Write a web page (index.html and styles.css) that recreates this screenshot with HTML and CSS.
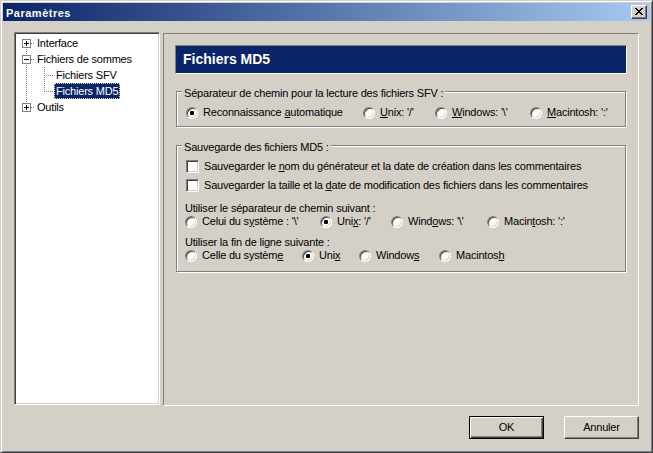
FILE: index.html
```html
<!DOCTYPE html>
<html lang="fr">
<head>
<meta charset="utf-8">
<title>Paramètres</title>
<link rel="stylesheet" href="styles.css">
</head>
<body>
<div class="window">
  <div class="titlebar">
    <span class="title">Paramètres</span>
    <span class="close">
      <svg width="8" height="7" viewBox="0 0 8 7" shape-rendering="crispEdges">
        <g fill="#000">
          <rect x="0" y="0" width="2" height="1"/><rect x="6" y="0" width="2" height="1"/>
          <rect x="1" y="1" width="2" height="1"/><rect x="5" y="1" width="2" height="1"/>
          <rect x="2" y="2" width="4" height="1"/>
          <rect x="3" y="3" width="2" height="1"/>
          <rect x="2" y="4" width="4" height="1"/>
          <rect x="1" y="5" width="2" height="1"/><rect x="5" y="5" width="2" height="1"/>
          <rect x="0" y="6" width="2" height="1"/><rect x="6" y="6" width="2" height="1"/>
        </g>
      </svg>
    </span>
  </div>
  <div class="client">
    <div class="main">
      <div class="tree">
        <div class="trow">
          <svg class="gut" width="19" height="16" viewBox="0 0 19 16" shape-rendering="crispEdges">
            <g stroke="#808080" stroke-dasharray="1 1"><line x1="15" y1="8.5" x2="19" y2="8.5"/><line x1="10.5" y1="14" x2="10.5" y2="16"/></g>
            <rect x="6.5" y="4.5" width="8" height="8" fill="#fff" stroke="#808080"/>
            <g stroke="#000"><line x1="8" y1="8.5" x2="13" y2="8.5"/><line x1="10.5" y1="6" x2="10.5" y2="11"/></g>
          </svg>
          <span class="lbl">Interface</span>
        </div>
        <div class="trow">
          <svg class="gut" width="19" height="16" viewBox="0 0 19 16" shape-rendering="crispEdges">
            <g stroke="#808080" stroke-dasharray="1 1"><line x1="15" y1="8.5" x2="19" y2="8.5"/><line x1="10.5" y1="0" x2="10.5" y2="4"/><line x1="10.5" y1="14" x2="10.5" y2="16"/></g>
            <rect x="6.5" y="4.5" width="8" height="8" fill="#fff" stroke="#808080"/>
            <g stroke="#000"><line x1="8" y1="8.5" x2="13" y2="8.5"/></g>
          </svg>
          <span class="lbl">Fichiers de sommes</span>
        </div>
        <div class="trow">
          <svg class="gut" width="38" height="16" viewBox="0 0 38 16" shape-rendering="crispEdges">
            <g stroke="#808080" stroke-dasharray="1 1"><line x1="10.5" y1="0" x2="10.5" y2="16"/><line x1="28.5" y1="0" x2="28.5" y2="16"/><line x1="30" y1="8.5" x2="38" y2="8.5"/></g>
          </svg>
          <span class="lbl">Fichiers SFV</span>
        </div>
        <div class="trow">
          <svg class="gut" width="38" height="16" viewBox="0 0 38 16" shape-rendering="crispEdges">
            <g stroke="#808080" stroke-dasharray="1 1"><line x1="10.5" y1="0" x2="10.5" y2="16"/><line x1="28.5" y1="0" x2="28.5" y2="9"/><line x1="30" y1="8.5" x2="38" y2="8.5"/></g>
          </svg>
          <span class="lbl sel">Fichiers MD5</span>
        </div>
        <div class="trow">
          <svg class="gut" width="19" height="16" viewBox="0 0 19 16" shape-rendering="crispEdges">
            <g stroke="#808080" stroke-dasharray="1 1"><line x1="15" y1="8.5" x2="19" y2="8.5"/><line x1="10.5" y1="0" x2="10.5" y2="4"/></g>
            <rect x="6.5" y="4.5" width="8" height="8" fill="#fff" stroke="#808080"/>
            <g stroke="#000"><line x1="8" y1="8.5" x2="13" y2="8.5"/><line x1="10.5" y1="6" x2="10.5" y2="11"/></g>
          </svg>
          <span class="lbl">Outils</span>
        </div>
      </div>

      <div class="panel">
        <div class="header">Fichiers MD5</div>

        <div class="group g1">
          <span class="legend">Séparateur de chemin pour la lecture des fichiers SFV :</span>
          <div class="opts opts1">
            <div class="opt"><span class="radio on"></span><span>Reconnaissance <u>a</u>utomatique</span></div>
            <div class="opt"><span class="radio"></span><span><u>U</u>nix: '/'</span></div>
            <div class="opt"><span class="radio"></span><span><u>W</u>indows: '\'</span></div>
            <div class="opt"><span class="radio"></span><span><u>M</u>acintosh: ':'</span></div>
          </div>
        </div>

        <div class="group g2">
          <span class="legend">Sauvegarde des fichiers MD5 :</span>
          <div class="crow"><span class="check"></span><span>Sauvegarder le <u>n</u>om du générateur et la date de création dans les commentaires</span></div>
          <div class="crow second"><span class="check"></span><span>Sauvegarder la taille et la <u>d</u>ate de modification des fichiers dans les commentaires</span></div>
          <div class="sub">Utiliser le séparateur de chemin suivant :</div>
          <div class="opts opts3">
            <div class="opt"><span class="radio"></span><span>Celui du s<u>y</u>stème : '\'</span></div>
            <div class="opt"><span class="radio on"></span><span>Uni<u>x</u>: '/'</span></div>
            <div class="opt"><span class="radio"></span><span>Wind<u>o</u>ws: '\'</span></div>
            <div class="opt"><span class="radio"></span><span>Macin<u>t</u>osh: ':'</span></div>
          </div>
          <div class="sub sub2">Utiliser la fin de ligne suivante :</div>
          <div class="opts opts4">
            <div class="opt"><span class="radio"></span><span>Celle du systèm<u>e</u></span></div>
            <div class="opt"><span class="radio on"></span><span>Uni<u>x</u></span></div>
            <div class="opt"><span class="radio"></span><span>Window<u>s</u></span></div>
            <div class="opt"><span class="radio"></span><span>Macintos<u>h</u></span></div>
          </div>
        </div>
      </div>
    </div>

    <div class="buttons">
      <div class="btn default">OK</div>
      <div class="btn">Annuler</div>
    </div>
  </div>
</div>
</body>
</html>
```
FILE: styles.css
```css
html, body {
  margin: 0;
  background: #d4d0c8;
}
body {
  font-family: "Liberation Sans", Arial, sans-serif;
  font-size: 11px;
  color: #000;
  letter-spacing: -0.2px;
}
.window {
  width: 653px;
  height: 453px;
  box-sizing: border-box;
  border: 1px solid;
  border-color: #d4d0c8 #404040 #404040 #d4d0c8;
  box-shadow: inset 1px 1px #fff, inset -1px -1px #808080;
  padding: 2px;
  display: flex;
  flex-direction: column;
  background: #d4d0c8;
}
.titlebar {
  flex: none;
  height: 18px;
  margin-bottom: 1px;
  display: flex;
  align-items: flex-start;
  justify-content: space-between;
  background: linear-gradient(to right, #0a246a, #a6caf0);
  color: #fff;
}
.title {
  font-weight: bold;
  line-height: 18px;
  padding: 1px 0 0 3px;
  letter-spacing: 0.5px;
}
.close {
  width: 16px;
  height: 14px;
  margin: 2px 3px 0 0;
  box-sizing: border-box;
  border: 1px solid;
  border-color: #fff #404040 #404040 #fff;
  box-shadow: inset -1px -1px #808080;
  background: #d4d0c8;
  display: flex;
  align-items: center;
  justify-content: center;
  padding: 0 1px 1px 0;
}
.close svg { display: block; }

.client {
  flex: 1;
  display: flex;
  flex-direction: column;
  padding: 10px 11px 11px;
}
.main {
  display: flex;
  gap: 3px;
  align-items: flex-start;
}
.tree {
  width: 146px;
  height: 373px;
  box-sizing: border-box;
  background: #fff;
  border: 1px solid;
  border-color: #808080 #fff #fff #808080;
  box-shadow: inset 1px 1px #404040, inset -1px -1px #d4d0c8;
  padding: 2px 0 0 1px;
}
.trow {
  display: flex;
  height: 16px;
  align-items: flex-start;
}
.gut { display: block; flex: none; }
.lbl {
  line-height: 16px;
  height: 16px;
  padding: 0 2px;
  white-space: nowrap;
  box-sizing: border-box;
}
.lbl.sel {
  background: #0a246a;
  color: #fff;
  outline: 1px dotted #e8e0a0;
  outline-offset: -1px;
}

.panel {
  width: 476px;
  height: 373px;
  margin-top: 1px;
  box-sizing: border-box;
  border: 1px solid;
  border-color: #808080 #fff #fff #808080;
  padding: 11px 11px 0;
}
.header {
  height: 29px;
  box-sizing: border-box;
  background: #0a246a;
  border: 1px solid;
  border-color: #808080 #fff #fff #808080;
  color: #fff;
  font-weight: bold;
  font-size: 14px;
  line-height: 27px;
  padding-left: 7px;
  letter-spacing: 0;
}
.group {
  position: relative;
  width: 450px;
  margin-left: 1px;
  box-sizing: border-box;
  border: 1px solid #808080;
  box-shadow: inset 1px 1px #fff, 1px 1px #fff;
}
.g1 {
  margin-top: 17px;
  padding: 14px 0 7px 9px;
}
.g2 {
  margin-top: 18px;
  padding: 14px 0 9px 9px;
}
.legend {
  position: absolute;
  top: -5px;
  left: 5px;
  padding: 0 2px;
  line-height: 13px;
  background: #d4d0c8;
  white-space: nowrap;
}
.opts {
  display: grid;
  align-items: center;
  line-height: 13px;
}
.opts1 { grid-template-columns: 177px 72px 95px auto; }
.opts3 { grid-template-columns: 135px 71px 96px auto; margin-left: -1px; }
.opts4 { grid-template-columns: 117px 57px 80px auto; margin-left: -1px; }
.opt {
  display: flex;
  align-items: center;
  height: 13px;
  white-space: nowrap;
}
.radio {
  flex: none;
  position: relative;
  width: 12px;
  height: 12px;
  box-sizing: border-box;
  border-radius: 50%;
  border: 1px solid;
  border-color: #808080 #fff #fff #808080;
  background: #fff;
  box-shadow: inset 1px 1px #404040, inset -1px -1px #d4d0c8;
  margin-right: 5px;
}
.radio.on::after {
  content: "";
  position: absolute;
  left: 3px;
  top: 3px;
  width: 4px;
  height: 4px;
  border-radius: 1px;
  background: #000;
}
.crow {
  display: flex;
  align-items: center;
  height: 13px;
  line-height: 13px;
  white-space: nowrap;
}
.crow.second { margin-top: 6px; }
.check {
  flex: none;
  width: 13px;
  height: 13px;
  box-sizing: border-box;
  border: 1px solid;
  border-color: #808080 #fff #fff #808080;
  box-shadow: inset 1px 1px #404040, inset -1px -1px #d4d0c8;
  background: #fff;
  margin-right: 5px;
}
.sub {
  line-height: 13px;
  margin-top: 10px;
  margin-left: -1px;
}
.sub.sub2 { margin-top: 8px; }
u { text-underline-offset: 1px; }

.buttons {
  display: flex;
  justify-content: flex-end;
  gap: 20px;
  margin-top: 10px;
}
.btn {
  width: 75px;
  height: 23px;
  box-sizing: border-box;
  border: 1px solid;
  border-color: #fff #404040 #404040 #fff;
  box-shadow: inset -1px -1px #808080;
  display: flex;
  align-items: center;
  justify-content: center;
  line-height: 13px;
}
.btn.default {
  border-color: #000;
  box-shadow: inset 1px 1px #fff, inset -1px -1px #404040, inset -2px -2px #808080;
}
```
